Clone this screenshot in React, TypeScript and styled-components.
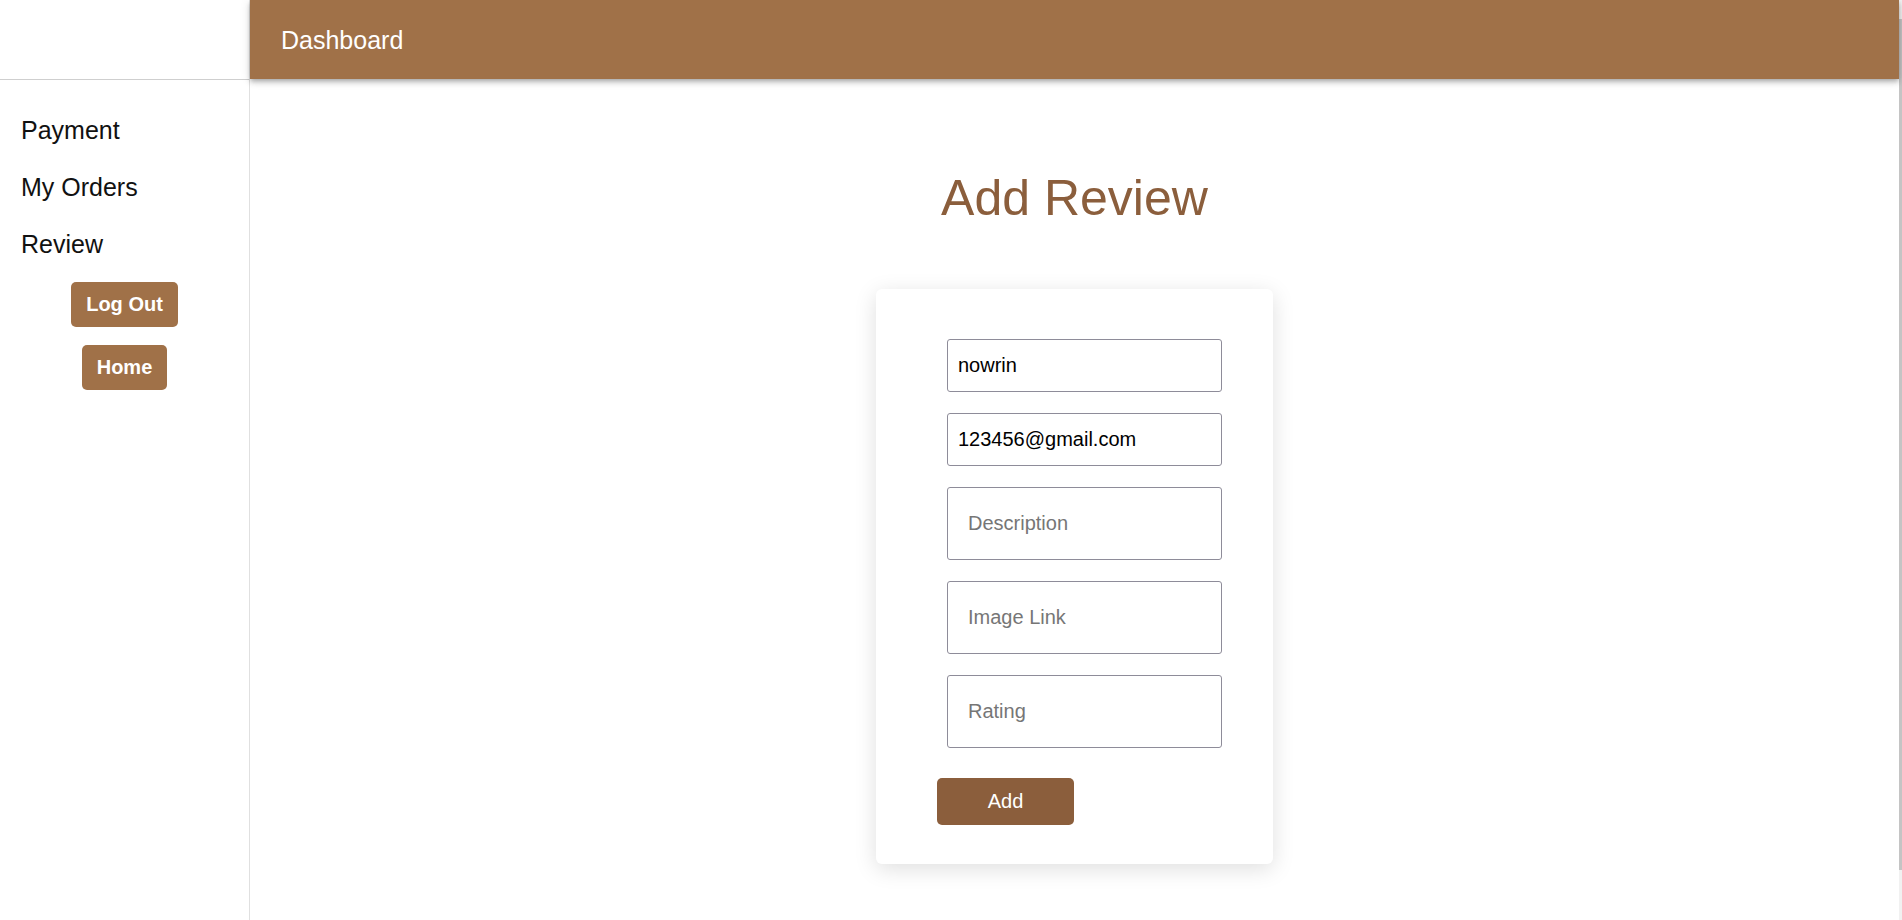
import React from "react";
import styled, { createGlobalStyle } from "styled-components";

const GlobalStyle = createGlobalStyle`
  html, body {
    margin: 0;
    padding: 0;
    background: #ffffff;
    font-family: "Liberation Sans", Arial, sans-serif;
  }
`;

const BROWN = "#a07148";
const DARK_BROWN = "#8b5e3c";

const Shell = styled.div`
  display: flex;
  height: 100vh;
  overflow: hidden;
`;

const Sidebar = styled.aside`
  width: 250px;
  flex-shrink: 0;
  box-sizing: border-box;
  border-right: 1px solid #e0e0e0;
  display: flex;
  flex-direction: column;
`;

const SidebarTop = styled.div`
  height: 79px;
  flex-shrink: 0;
  border-bottom: 1px solid #cfcfcf;
`;

const NavList = styled.nav`
  display: flex;
  flex-direction: column;
  padding-top: 22px;
`;

const NavItem = styled.a`
  display: block;
  padding-left: 21px;
  font-size: 25px;
  line-height: 57px;
  color: #111111;
  text-decoration: none;
`;

const ButtonStack = styled.div`
  display: flex;
  flex-direction: column;
  align-items: center;
  gap: 18px;
  padding-top: 9px;
`;

const SideButton = styled.button`
  height: 45px;
  padding: 0 15px;
  border: none;
  border-radius: 5px;
  background: ${BROWN};
  color: #ffffff;
  font-family: "Liberation Sans", Arial, sans-serif;
  font-size: 20px;
  font-weight: 700;
  cursor: pointer;
`;

const Main = styled.main`
  flex: 1;
  min-width: 0;
  display: flex;
  flex-direction: column;
`;

const TopBar = styled.header`
  position: relative;
  z-index: 1;
  height: 79px;
  flex-shrink: 0;
  box-sizing: border-box;
  padding: 2px 0 0 31px;
  display: flex;
  align-items: center;
  background: ${BROWN};
  color: #ffffff;
  font-size: 25px;
  box-shadow: 0px 2px 4px -1px rgba(0, 0, 0, 0.2),
    0px 4px 5px 0px rgba(0, 0, 0, 0.14), 0px 1px 10px 0px rgba(0, 0, 0, 0.12);
`;

const Content = styled.section`
  display: flex;
  flex-direction: column;
  align-items: center;
`;

const Title = styled.h1`
  margin: 91px 0 62px;
  font-size: 50px;
  line-height: 57px;
  font-weight: 400;
  color: ${DARK_BROWN};
`;

const Card = styled.form`
  width: 397px;
  box-sizing: border-box;
  padding: 50px 51px 39px 61px;
  border-radius: 6px;
  background: #ffffff;
  box-shadow: 0 5px 22px rgba(0, 0, 0, 0.13);
  display: flex;
  flex-direction: column;
  align-items: flex-start;
`;

const Fields = styled.div`
  display: flex;
  flex-direction: column;
  gap: 21px;
  margin-left: 10px;
`;

const Field = styled.input<{ $large?: boolean }>`
  width: 275px;
  height: ${(p) => (p.$large ? 73 : 53)}px;
  box-sizing: border-box;
  padding: 0 ${(p) => (p.$large ? 20 : 10)}px;
  border: 1px solid #8e8c99;
  border-radius: 3px;
  font-family: "Liberation Sans", Arial, sans-serif;
  font-size: 20px;
  color: #000000;
  background: #ffffff;
  outline: none;
  &::placeholder {
    color: #767676;
  }
`;

const AddButton = styled.button`
  margin-top: 30px;
  width: 137px;
  height: 47px;
  border: none;
  border-radius: 5px;
  background: ${DARK_BROWN};
  color: #ffffff;
  font-family: "Liberation Sans", Arial, sans-serif;
  font-size: 20px;
  cursor: pointer;
`;

const ScrollTrack = styled.div`
  width: 3px;
  flex-shrink: 0;
  box-sizing: border-box;
  padding-top: 19px;
  background: #f1f1f1;
  display: flex;
  flex-direction: column;
`;

const ScrollThumb = styled.div`
  height: 851px;
  background: #c4c4c4;
`;

export default function App() {
  return (
    <>
      <GlobalStyle />
      <Shell>
        <Sidebar>
          <SidebarTop />
          <NavList>
            <NavItem href="#">Payment</NavItem>
            <NavItem href="#">My Orders</NavItem>
            <NavItem href="#">Review</NavItem>
          </NavList>
          <ButtonStack>
            <SideButton type="button">Log Out</SideButton>
            <SideButton type="button">Home</SideButton>
          </ButtonStack>
        </Sidebar>
        <Main>
          <TopBar>Dashboard</TopBar>
          <Content>
            <Title>Add Review</Title>
            <Card onSubmit={(e) => e.preventDefault()}>
              <Fields>
                <Field defaultValue="nowrin" />
                <Field defaultValue="123456@gmail.com" />
                <Field $large placeholder="Description" />
                <Field $large placeholder="Image Link" />
                <Field $large placeholder="Rating" />
              </Fields>
              <AddButton type="submit">Add</AddButton>
            </Card>
          </Content>
        </Main>
        <ScrollTrack>
          <ScrollThumb />
        </ScrollTrack>
      </Shell>
    </>
  );
}
